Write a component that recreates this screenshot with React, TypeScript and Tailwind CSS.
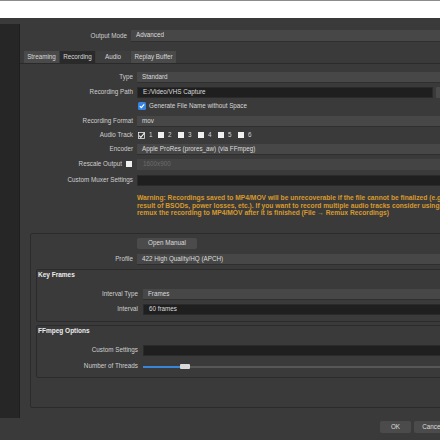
import React from "react";

const combo = "h-[11px] flex-1 flex items-center pl-[5px] bg-[#474747] border-b border-[#2f2f2f] text-[#dcdcdc]";
const dark = "h-[11px] flex-1 flex items-center pl-[5px] bg-[#1f1f1f] border border-[#2a2a2a] text-[#dcdcdc]";

function Row({
  label,
  labelW,
  gap = 4,
  className = "",
  children,
}: {
  label: React.ReactNode;
  labelW: number;
  gap?: number;
  className?: string;
  children: React.ReactNode;
}) {
  return (
    <div className={`flex items-center ${className}`} style={{ gap }}>
      <div className="shrink-0 flex justify-end items-center text-[#cfcfcf]" style={{ width: labelW }}>
        {label}
      </div>
      {children}
    </div>
  );
}

function BlueCheck() {
  return (
    <svg width="8" height="8" viewBox="0 0 8 8">
      <rect x="0" y="0" width="8" height="8" rx="1.5" fill="#3584e4" />
      <path d="M1.8 4.1 L3.3 5.6 L6.2 2.4" stroke="#fff" strokeWidth="1.2" fill="none" />
    </svg>
  );
}

function TrackCheck({ n, checked }: { n: number; checked?: boolean }) {
  return (
    <div className="w-[20px] shrink-0 flex items-center gap-[4px]">
      {checked ? (
        <svg width="7" height="7" viewBox="0 0 7 7">
          <rect x="0.5" y="0.5" width="6" height="6" stroke="#e8e8e8" strokeWidth="0.8" fill="none" />
          <path d="M1.2 3.6 L2.8 5.3 L6.6 0.8" stroke="#f2f2f2" strokeWidth="1.1" fill="none" />
        </svg>
      ) : (
        <div className="w-[6px] h-[6px] bg-[#f0f0f0]" />
      )}
      <span className="text-[#d6d6d6]">{n}</span>
    </div>
  );
}

export default function App() {
  const tabs = [
    { label: "Streaming", w: "w-[35px]", bg: "bg-[#4a4a4a]" },
    { label: "Recording", w: "w-[35px]", bg: "bg-[#2a2a2a]" },
    { label: "Audio", w: "w-[34px]", bg: "bg-[#3e3e3e]" },
    { label: "Replay Buffer", w: "w-[45px]", bg: "bg-[#4a4a4a]" },
  ];

  return (
    <div className="w-[440px] h-[440px] overflow-hidden bg-[#3a3a3a] flex flex-col font-['Liberation_Sans',Arial,sans-serif] text-[6.3px] leading-none text-[#d6d6d6]">
      <div className="h-[18px] shrink-0 bg-white border-t border-[#8c8c8c]" />
      <div className="flex flex-1 min-h-0">
        <div className="w-[20px] shrink-0 mt-[6px] mb-[22px] bg-[#262626] border-r border-[#1f1f1f]" />
        <div className="w-[458px] shrink-0 flex flex-col">
          {/* output mode */}
          <Row label="Output Mode" labelW={107} className="mt-[12px]">
            <div className={`${combo} h-[12px]`}>Advanced</div>
          </Row>

          {/* tabs */}
          <div className="flex gap-[1px] pl-[4px] mt-[9px]">
            {tabs.map((t) => (
              <div key={t.label} className={`${t.w} ${t.bg} h-[12px] flex items-center justify-center text-[#d8d8d8]`}>
                {t.label}
              </div>
            ))}
          </div>

          <div className="border-t border-[#2a2a2a] flex flex-col">
            <Row label="Type" labelW={113} className="mt-[8px]">
              <div className={combo}>Standard</div>
            </Row>
            <Row label="Recording Path" labelW={113} className="mt-[4px]">
              <div className="flex-1 flex items-center gap-[3px]">
                <div className={`${dark} w-[296px] flex-none`}>E:/Video/VHS Capture</div>
                <div className="h-[11px] flex-1 bg-[#4a4a4a] rounded-[1px]" />
              </div>
            </Row>
            <Row label="" labelW={113} className="mt-[3px] h-[10px]">
              <div className="flex items-center gap-[3px] pl-[1px]">
                <BlueCheck />
                <span>Generate File Name without Space</span>
              </div>
            </Row>
            <Row label="Recording Format" labelW={113} className="mt-[5px]">
              <div className={combo}>mov</div>
            </Row>
            <Row label="Audio Track" labelW={113} className="mt-[3px] h-[10px]">
              <div className="flex items-center pl-[1px]">
                <TrackCheck n={1} checked />
                <TrackCheck n={2} />
                <TrackCheck n={3} />
                <TrackCheck n={4} />
                <TrackCheck n={5} />
                <TrackCheck n={6} />
              </div>
            </Row>
            <Row label="Encoder" labelW={113} className="mt-[4px]">
              <div className={combo}>Apple ProRes (prores_aw) (via FFmpeg)</div>
            </Row>
            <Row
              label={
                <div className="flex items-center gap-[4px] pr-[1px]">
                  <span>Rescale Output</span>
                  <div className="w-[6px] h-[6px] bg-[#f0f0f0]" />
                </div>
              }
              labelW={113}
              className="mt-[4px]"
            >
              <div className="h-[11px] flex-1 flex items-center pl-[6px] bg-[#444444] text-[#6d6d6d]">1600x900</div>
            </Row>
            <Row label="Custom Muxer Settings" labelW={113} className="mt-[5px]">
              <div className={dark} />
            </Row>

            <div className="ml-[117px] mt-[8px] font-bold text-[6.7px] text-[#d89a2e] leading-[7.7px] whitespace-nowrap">
              <div>Warning: Recordings saved to MP4/MOV will be unrecoverable if the file cannot be finalized (e.g. as a</div>
              <div>result of BSODs, power losses, etc.). If you want to record multiple audio tracks consider using MKV and</div>
              <div>remux the recording to MP4/MOV after it is finished (File → Remux Recordings)</div>
            </div>

            {/* encoder group */}
            <div className="ml-[10px] mr-[4px] mt-[16px] border border-[#2b2b2b] rounded-[2px] flex flex-col pb-[29px]">
              <div className="ml-[106px] mt-[4px] w-[60px] h-[11px] bg-[#4b4b4b] rounded-[2px] flex items-center justify-center text-[#dcdcdc]">
                Open Manual
              </div>
              <Row label="Profile" labelW={102} className="mt-[5px]">
                <div className={combo}>422 High Quality/HQ (APCH)</div>
              </Row>

              <div className="ml-[5px] mr-[4px] mt-[4px] border border-[#2b2b2b] rounded-[2px] flex flex-col pb-[6px]">
                <div className="h-[10px] flex items-center pl-[1px] font-bold text-[6.5px] text-[#ececec]">Key Frames</div>
                <Row label="Interval Type" labelW={101} gap={5} className="mt-[9px]">
                  <div className={combo}>Frames</div>
                </Row>
                <Row label="Interval" labelW={101} gap={5} className="mt-[4px]">
                  <div className={dark}>60 frames</div>
                </Row>
              </div>

              <div className="ml-[5px] mr-[4px] mt-[3px] border border-[#2b2b2b] rounded-[2px] flex flex-col pb-[5px]">
                <div className="h-[10px] flex items-center pl-[1px] font-bold text-[6.5px] text-[#ececec]">FFmpeg Options</div>
                <Row label="Custom Settings" labelW={101} gap={5} className="mt-[9px]">
                  <div className={dark} />
                </Row>
                <Row label="Number of Threads" labelW={101} gap={5} className="mt-[5px]">
                  <div className="h-[11px] flex-1 flex items-center">
                    <div className="w-[37px] h-[2px] bg-[#3a86d6]" />
                    <div className="w-[10px] h-[5px] bg-[#d9d9d9] rounded-[1px]" />
                    <div className="flex-1 h-[2px] bg-[#575757]" />
                  </div>
                </Row>
              </div>
            </div>

            {/* dialog buttons */}
            <div className="flex justify-end gap-[3px] pr-[28px] mt-[13px]">
              <div className="w-[31px] h-[12px] bg-[#4b4b4b] rounded-[2px] flex items-center justify-center text-[#dcdcdc]">OK</div>
              <div className="w-[36px] h-[12px] bg-[#4b4b4b] rounded-[2px] flex items-center justify-center text-[#dcdcdc]">Cancel</div>
            </div>
          </div>
        </div>
      </div>
    </div>
  );
}
